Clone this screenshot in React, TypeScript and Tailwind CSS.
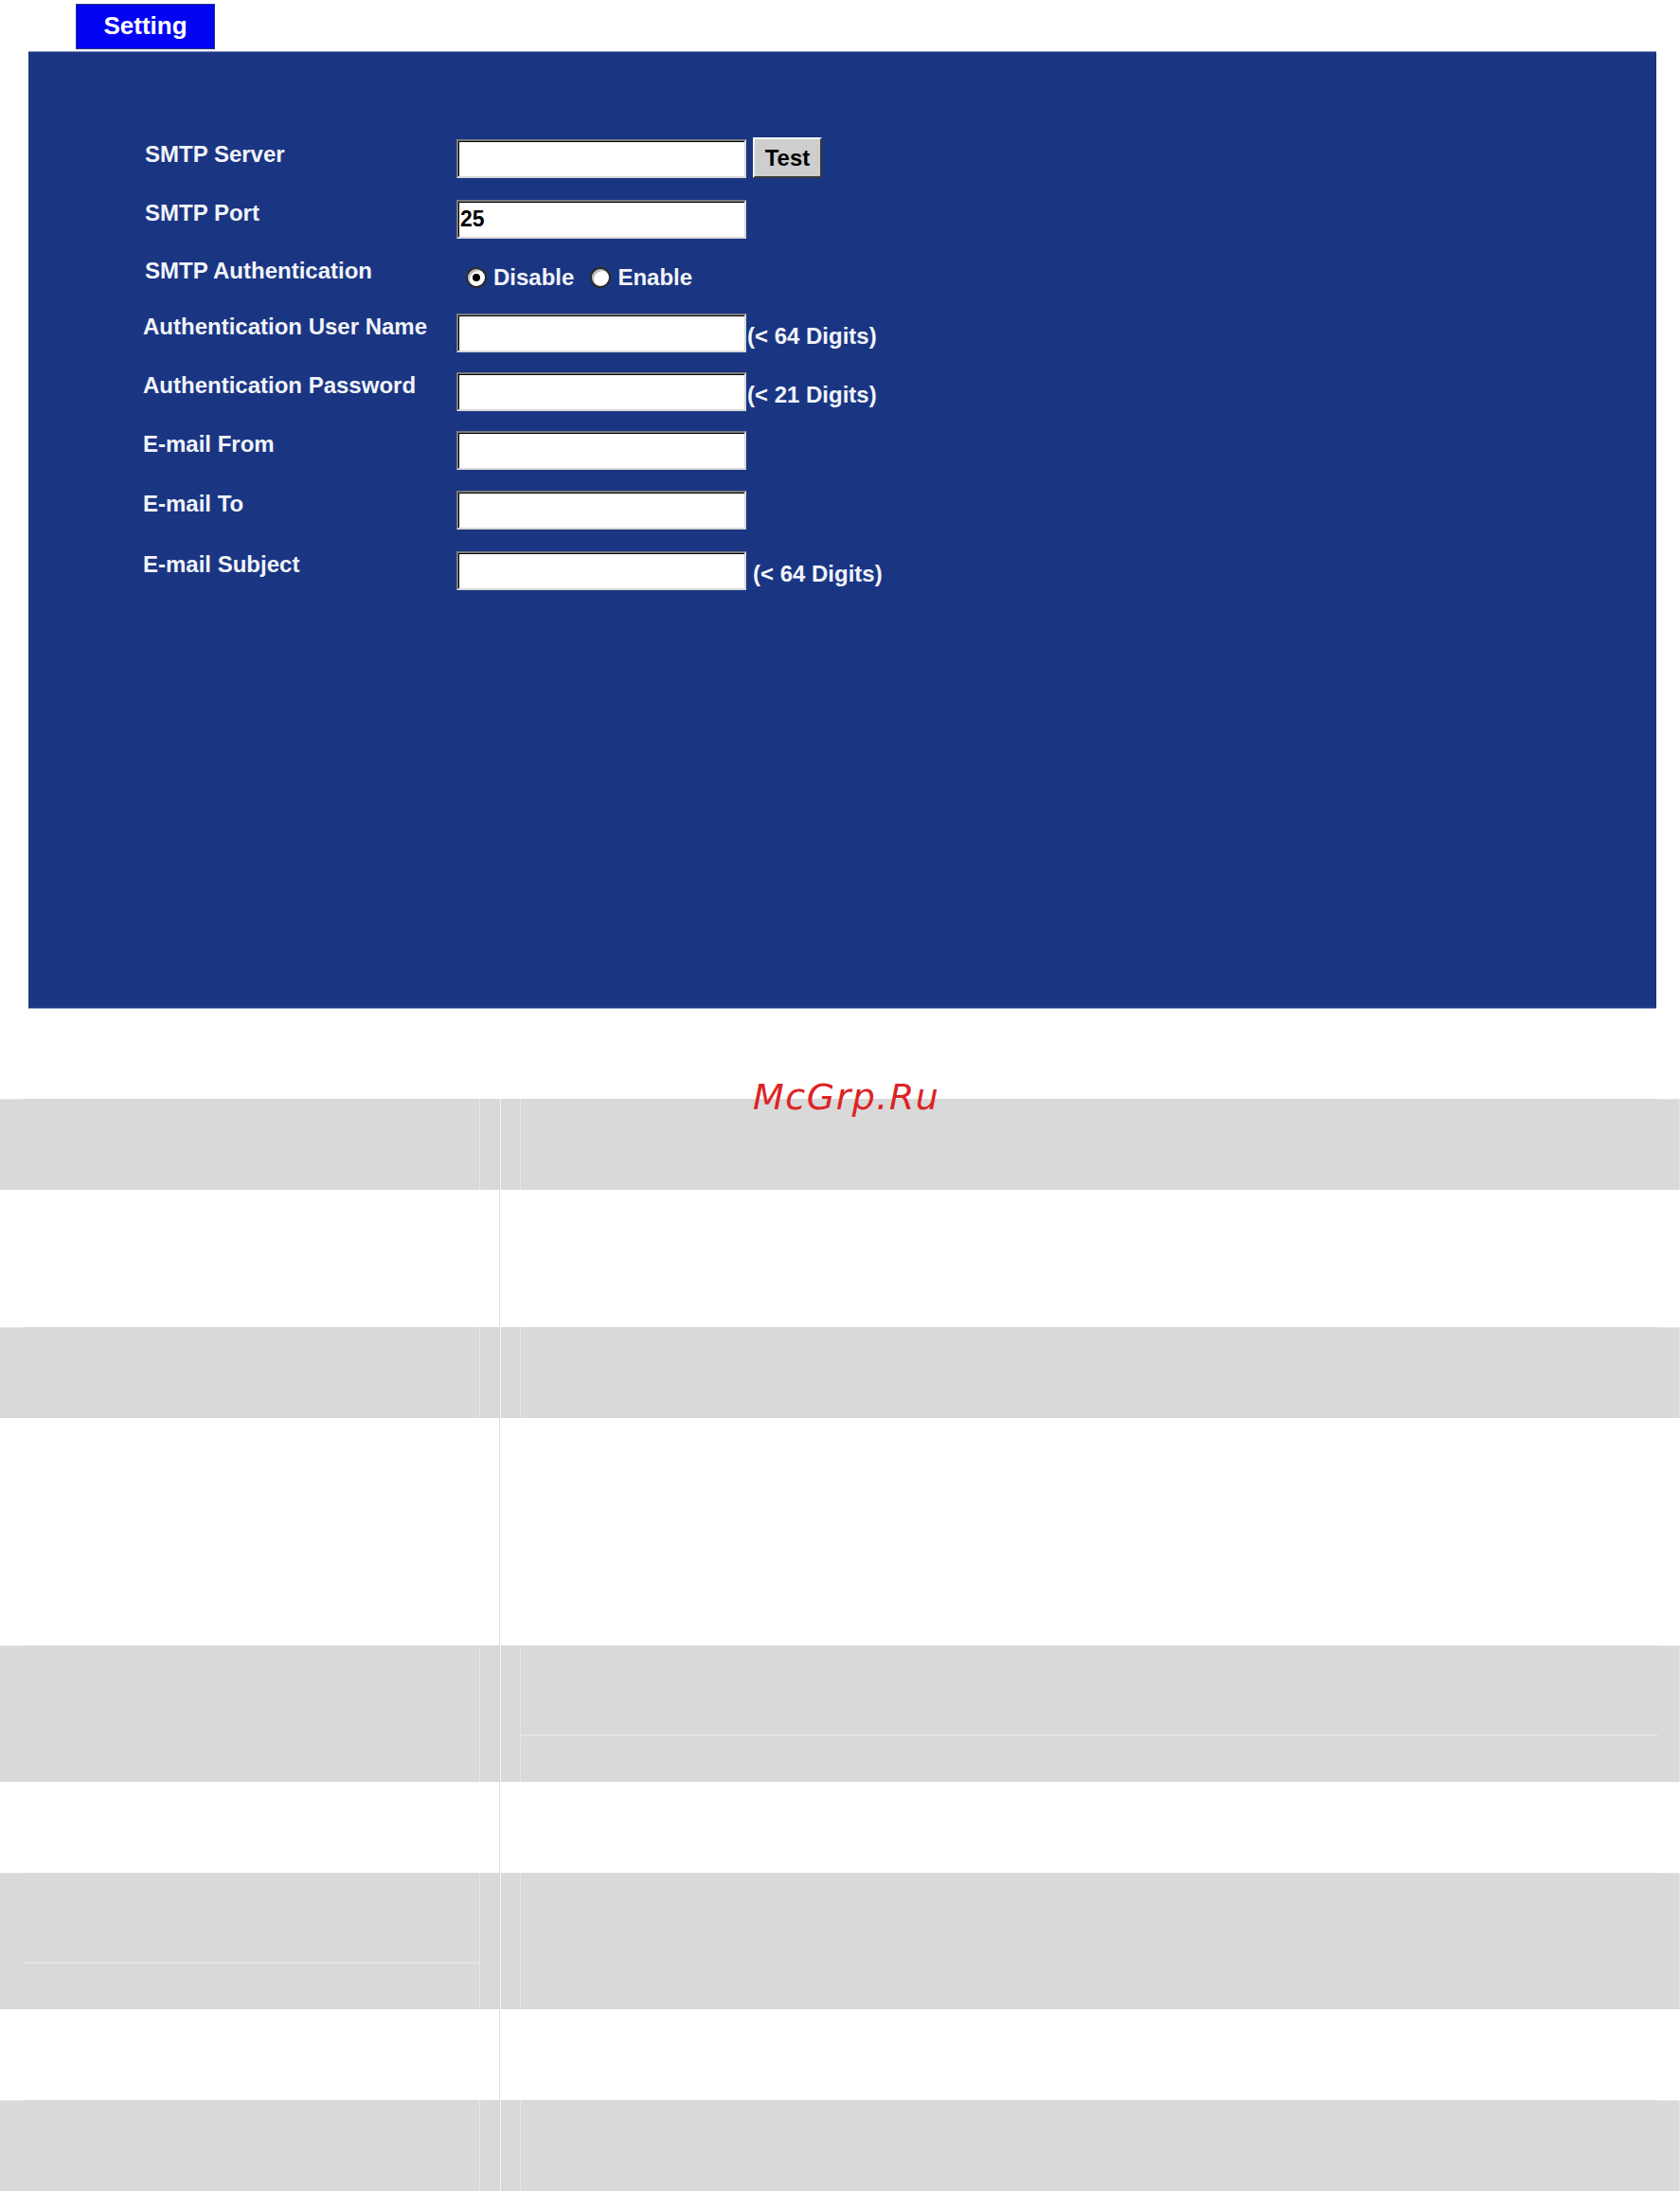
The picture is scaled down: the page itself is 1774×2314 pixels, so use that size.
import React from "react";

type Field = {
	label: string;
	value?: string;
	hint?: string;
	hintGap?: string;
	rowH: string;
};

const fields: Field[] = [
	{ label: "Authentication User Name", hint: "(< 64 Digits)", hintGap: "ml-[1px]", rowH: "h-[62px]" },
	{ label: "Authentication Password", hint: "(< 21 Digits)", hintGap: "ml-[1px]", rowH: "h-[62px]" },
	{ label: "E-mail From", rowH: "h-[63px]" },
	{ label: "E-mail To", rowH: "h-[64px]" },
	{ label: "E-mail Subject", hint: "(< 64 Digits)", hintGap: "ml-[7px]", rowH: "h-[64px]" },
];

function TextBox({ value }: { value?: string }) {
	return (
		<div className="w-[306px] h-[41px] shrink-0 bg-white border-2 border-t-[#7c7c7c] border-l-[#7c7c7c] border-b-[#d8d8d8] border-r-[#d8d8d8] shadow-[inset_1px_1px_0_#000] flex items-center pl-[2px] text-[23px] font-bold leading-none text-black">
			{value}
		</div>
	);
}

function Radio({ checked }: { checked?: boolean }) {
	return (
		<span className="w-[22px] h-[22px] rounded-full bg-white border-2 border-[#2a2a2a] shadow-[inset_2px_2px_0_#bdbdbd] flex items-center justify-center shrink-0">
			{checked && <span className="w-[8px] h-[8px] rounded-full bg-black" />}
		</span>
	);
}

function Label({ children, pt = "pt-[2px]", shift }: { children: React.ReactNode; pt?: string; shift?: boolean }) {
	return (
		<div
			className={`${shift ? "w-[331px] -ml-[2px]" : "w-[329px]"} shrink-0 ${pt} text-[24px] leading-[24px] font-bold text-[#f2f4fa] whitespace-nowrap`}
		>
			{children}
		</div>
	);
}

// one shaded table row: narrow spacer columns between the two wide cells
function GrayRow({ h, inner }: { h: string; inner?: "left" | "right" }) {
	return (
		<div className={`flex ${h} bg-[#d9d9d9]`}>
			<div className="w-[506px] relative">
				<div className="absolute left-0 top-0 w-[25px] h-[1px] bg-[#e6e6e6]" />
				{inner === "left" && (
					<div className="ml-[25px] h-[96px] border-b-2 border-b-[#e4e4e4]" />
				)}
			</div>
			<div className="w-[22px] border-l border-l-[#e6e6e6]" />
			<div className="w-[21px] border-l border-l-[#f2f2f2]" />
			<div className="flex-1 border-l border-l-[#e6e6e6] border-r border-r-[#e6e6e6] relative">
				<div className="absolute right-0 top-0 w-[22px] h-[1px] bg-[#e6e6e6]" />
				{inner === "right" && (
					<div className="mr-[22px] h-[96px] border-b-2 border-b-[#e4e4e4]" />
				)}
			</div>
		</div>
	);
}

function WhiteRow({ h }: { h: string }) {
	return (
		<div className={`flex ${h} bg-white`}>
			<div className="w-[528px] border-r border-r-[#e4e4e4]" />
			<div className="flex-1" />
		</div>
	);
}

export default function App() {
	return (
		<div className="w-[1774px] h-[2314px] bg-white relative overflow-hidden font-['Liberation_Sans',Arial,sans-serif]">
			{/* Tab */}
			<div className="pt-[4px] pl-[80px]">
				<div className="w-[147px] h-[48px] bg-[#0404f4] border border-[#26367e] flex items-center justify-center text-white font-bold text-[26px] leading-none pb-[2px]">
					Setting
				</div>
			</div>

			{/* Settings panel */}
			<div className="mt-[2px] ml-[30px] w-[1719px] h-[1011px] bg-[#1a3683] border-t border-t-[#7f8fbf] border-b border-b-[#8a9ac8] pt-[92px] pl-[123px]">
				<div className="flex h-[64px]">
					<Label pt="pt-[4px]">SMTP Server</Label>
					<TextBox />
					<button className="ml-[7px] -mt-[2px] w-[73px] h-[43px] bg-[#cecece] border-2 border-t-[#f4f4f4] border-l-[#f4f4f4] border-b-[#3a3a3a] border-r-[#3a3a3a] text-black font-bold text-[24px] leading-none">
						Test
					</button>
				</div>
				<div className="flex h-[60px]">
					<Label>SMTP Port</Label>
					<TextBox value="25" />
				</div>
				<div className="flex h-[60px]">
					<Label pt="pt-[3px]">SMTP Authentication</Label>
					<div className="flex items-center self-start mt-[10px] text-[24px] leading-[24px] font-bold text-[#f2f4fa] ml-[10px]">
						<Radio checked />
						<span className="ml-[7px]">Disable</span>
						<span className="ml-[17px]">
							<Radio />
						</span>
						<span className="ml-[7px]">Enable</span>
					</div>
				</div>
				{fields.map(f => (
					<div key={f.label} className={`flex ${f.rowH}`}>
						<Label shift>{f.label}</Label>
						<TextBox value={f.value} />
						{f.hint && (
							<span className={`${f.hintGap} pt-[12px] text-[24px] leading-[24px] font-bold text-[#f2f4fa] whitespace-nowrap`}>
								{f.hint}
							</span>
						)}
					</div>
				))}
			</div>

			{/* Description table (empty) */}
			<div className="mt-[95px]">
				<GrayRow h="h-[96px]" />
				<WhiteRow h="h-[145px]" />
				<GrayRow h="h-[96px]" />
				<WhiteRow h="h-[240px]" />
				<GrayRow h="h-[144px]" inner="right" />
				<WhiteRow h="h-[96px]" />
				<GrayRow h="h-[144px]" inner="left" />
				<WhiteRow h="h-[96px]" />
				<GrayRow h="h-[96px]" />
			</div>

			{/* watermark */}
			<div className="absolute left-[795px] top-[1139px] text-[38px] leading-none italic tracking-[1.5px] text-[#dc2424] font-['DejaVu_Sans',sans-serif]">
				McGrp.Ru
			</div>
		</div>
	);
}
